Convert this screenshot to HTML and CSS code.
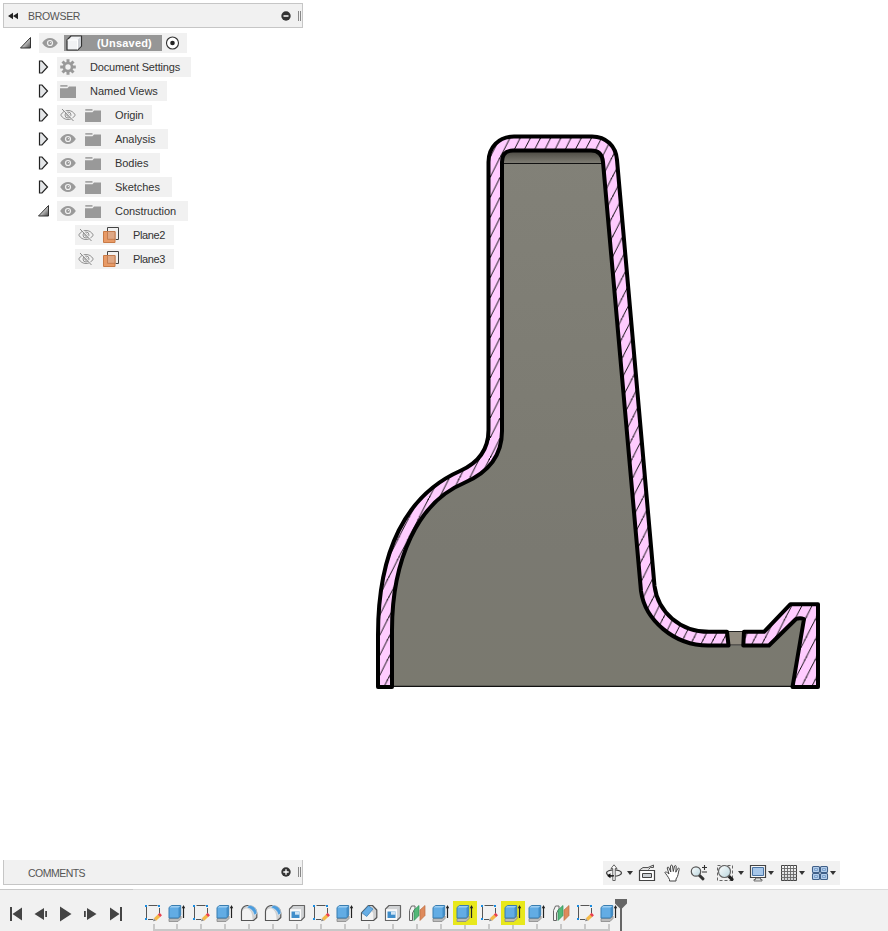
FILE: index.html
```html
<!DOCTYPE html>
<html lang="en">
<head>
<meta charset="utf-8">
<title>Section view</title>
<link rel="stylesheet" href="styles.css">
</head>
<body>
<svg class="defs" aria-hidden="true">
  <defs>
    <linearGradient id="g-open" x1="0" y1="0" x2="1" y2="1"><stop offset=".35" stop-color="#eee"/><stop offset="1" stop-color="#444"/></linearGradient>
    <linearGradient id="g-lens" x1="0" y1="0" x2="1" y2="1"><stop offset="0" stop-color="#fff"/><stop offset="1" stop-color="#b9d6de"/></linearGradient>
    <linearGradient id="g-grey" x1="0" y1="0" x2="0" y2="1"><stop offset="0" stop-color="#f8f8f8"/><stop offset="1" stop-color="#cfd1d3"/></linearGradient>
  </defs>
  <symbol id="closed" viewBox="0 0 12 14"><path d="M1.500 1H4L9.500 7 4 13H1.500Z" fill="#e4e6e8" stroke="#222" stroke-width="1.200"/></symbol>
  <symbol id="open" viewBox="0 0 12 14"><path d="M10.500 1.500V12H.5Z" fill="url(#g-open)" stroke="#333" stroke-width="1"/></symbol>
  <symbol id="eye" viewBox="0 0 16 12"><path d="M.2 6C2.200 2.500 5 1 8 1s5.800 1.500 7.800 5C13.800 9.500 11 11 8 11S2.200 9.500.2 6Z" fill="#9a9a9a"/><circle cx="8" cy="6" r="3.100" fill="#f1f1f1"/><circle cx="8" cy="6" r="1.900" fill="#9a9a9a"/><circle cx="8.500" cy="5.500" r=".6" fill="#f1f1f1"/></symbol>
  <symbol id="hidden" viewBox="0 0 16 12"><g fill="none" stroke="#929292" stroke-width="1"><path d="M.7 6C2.600 2.800 5 1.500 8 1.500s5.400 1.300 7.300 4.500C13.400 9.200 11 10.500 8 10.500S2.600 9.200.7 6Z"/><circle cx="8" cy="6" r="3"/><circle cx="8" cy="6" r="1.200"/></g><path d="M3 0L14 12" stroke="#f1f1f1" stroke-width="1.500"/><path d="M2 0L13.500 12" stroke="#888" stroke-width="1"/></symbol>
  <symbol id="folder" viewBox="0 0 16 13"><path d="M0 3.300H7.500L9 1.500H16V13H0Z" fill="#999"/><path d="M.3 .9H7.500" stroke="#999" stroke-width="1.500"/></symbol>
  <symbol id="gear" viewBox="0 0 16 16"><g stroke="#999" stroke-width="3"><path d="M8 .2V15.800M.2 8H15.800M2.500 2.500L13.500 13.500M13.500 2.500L2.500 13.500"/></g><circle cx="8" cy="8" r="5.300" fill="#999"/><circle cx="8" cy="8" r="2.700" fill="#f1f1f1"/></symbol>
  <symbol id="cube" viewBox="0 0 17 16"><path d="M1 5L5 1H15.500V11L11.500 15H1Z" fill="#f1f2f4" stroke="#333" stroke-width="1.200" stroke-linejoin="round"/><path d="M11.500 5L15 1.500V11L11.500 14.500Z" fill="#cdd0d5"/><path d="M1.500 5H11.500V14.500" fill="none" stroke="#fff"/></symbol>
  <symbol id="plane" viewBox="0 0 16 16"><path d="M4.500 4V.5H15.500V12.500H12.500" fill="none" stroke="#444" stroke-width="1"/><path d="M.5 4.500H12V15.500H.5Z" fill="#e89a66" stroke="#c87a46"/><path d="M4.500 4.500H12V12.300H4.500Z" fill="#dfa885" stroke="#bd7448" stroke-width=".8"/></symbol>

  <symbol id="sketch" viewBox="0 0 24 24"><path d="M5.500 6V17M7.500 4.500H16.500M18.500 7V12.500M7 18.500H12" fill="none" stroke="#555"/><path d="M4 4h2v2H4zM17 4h2v2H17zM4 17h2v2H4z" fill="#1b8ce0"/><path d="M14 18.500L18.300 14.500" stroke="#f4b948" stroke-width="3.400"/><path d="M18 14.800L19.800 13.100" stroke="#e84050" stroke-width="3.400"/><path d="M12 20.300L12.800 17.500 15 19.700Z" fill="#888"/></symbol>
  <symbol id="extrude" viewBox="0 0 24 24"><path d="M4 17.500H13.500L16 15V17.500L13 20.500H4Z" fill="#bbb" stroke="#888" stroke-width=".8"/><path d="M4 6.500L6.500 4.500H15.700V14L13.500 17H4Z" fill="#62ace4" stroke="#397db0" stroke-width="1"/><path d="M4.500 6.500L6.500 5H15.200L13.500 6.500Z" fill="#9dcef2"/><path d="M13.500 7L15.300 5.500V14L13.500 16.300Z" fill="#428ec8"/><path d="M18.500 6V17" stroke="#222" stroke-width="1.200"/><path d="M16.800 7.300L18.500 4 20.200 7.300Z" fill="#222"/></symbol>
  <symbol id="fillet" viewBox="0 0 24 24"><path d="M4.500 19.500V10.500C4.500 7 7.500 4.500 10 4.500H12C16.500 4.500 19.800 8.500 19.800 12V16.500L16.500 19.500Z" fill="#cfd0d1" stroke="#555" stroke-width="1.200" stroke-linejoin="round"/><path d="M5.200 18.900V10.500C6 8 8 7 10 7.500C13.500 8.500 15.500 12 15.500 18.900Z" fill="#f3f3f3"/><path d="M9.800 6.800L12 4.200C16.500 4.200 20 8 20 12.500L17 14.300C16.800 10.300 14 7.600 9.800 6.800Z" fill="#4c9dde" stroke="#f1f1f1" stroke-width=".6"/></symbol>
  <symbol id="chamfer" viewBox="0 0 24 24"><path d="M4.500 19.500V12L11.500 4.500H15.500L19.800 9V16.500L16.500 19.500Z" fill="#cfd0d1" stroke="#555" stroke-width="1.200" stroke-linejoin="round"/><path d="M5.100 18.900V13L10 15.500 14.500 10 16.200 12V18.900Z" fill="#f3f3f3"/><path d="M5 11.700L11.500 4.800 16 8 9.700 15.500Z" fill="#67aee5" stroke="#3a83bb" stroke-width=".7"/></symbol>
  <symbol id="shell" viewBox="0 0 24 24"><path d="M4.500 8L8 4.500H19.500V16L16 19.500H4.500Z" fill="#d0d2d4" stroke="#666" stroke-width="1.200" stroke-linejoin="round"/><path d="M5.100 8.200H16V18.900H5.100Z" fill="#fafafa"/><path d="M6.500 10.500H14.500V17H6.500Z" fill="#3f8ecb"/><path d="M10 10.500H14.500V13.700H10Z" fill="#cfe4f5"/></symbol>
  <symbol id="split" viewBox="0 0 24 24"><path d="M4.500 19.500V9.500L6.500 5H10V8L7.500 12V19.500Z" fill="#f4f4f4" stroke="#666" stroke-width="1"/><path d="M9 19.500V9L14 4.500V14.500Z" fill="#54b878" stroke="#2f915a" stroke-width=".7"/><path d="M15 19.500V9L20 4.500V14.500Z" fill="#de8a5c" stroke="#bb6e42" stroke-width=".7"/></symbol>

  <symbol id="orbit" viewBox="0 0 18 18"><ellipse cx="9" cy="9" rx="7.500" ry="3.200" fill="none" stroke="#444" stroke-width="1.300"/><path d="M7.800 16.500V4.500H6L9 .8 12 4.500H10.200V16.500Z" fill="#fff" stroke="#555" stroke-width=".9"/><path d="M4 11.800H9" stroke="#222" stroke-width="1.400"/><path d="M5.500 9.300V14.300L2 11.800Z" fill="#111"/></symbol>
  <symbol id="look" viewBox="0 0 18 18"><path d="M1.500 6L5 3.500H10L15.500 1V3.500H12.500L10.500 5.500" fill="#ddd" stroke="#555"/><path d="M1.500 6.500H16.500V16.500H1.500Z" fill="#fff" stroke="#444" stroke-width="1.200"/><path d="M4.500 9.500H13.500V13.500H4.500Z" fill="#ccd0d4" stroke="#444"/></symbol>
  <symbol id="hand" viewBox="0 0 18 18"><path d="M5.500 15.500C4 12.500 2 10 .8 8.500 1.800 7.500 3.200 8.200 5 10L3.200 4C3.400 2.700 4.700 2.800 5 4L6.800 8 6.500 2C7 .8 8.200.8 8.500 2L9.300 7.500 10.500 2C11.200 1 12.300 1.500 12.200 2.700L11.800 8.200 13.800 4.500C14.800 3.700 15.700 4.500 15.200 5.500 14 9 14.500 12 12 15V17H5.500Z" fill="#fff" stroke="#444" stroke-width="1" stroke-linejoin="round"/></symbol>
  <symbol id="zoom" viewBox="0 0 18 18"><path d="M9 11L13 14.800" stroke="#333" stroke-width="3" stroke-linecap="round"/><circle cx="6" cy="7.500" r="4.700" fill="url(#g-lens)" stroke="#555" stroke-width="1.200"/><path d="M12 3.500H17M14.500 1V6M12 8H17" stroke="#333" stroke-width="1.100"/></symbol>
  <symbol id="fit" viewBox="0 0 18 18"><path d="M1.500 1.500H16.500V16.500H1.500Z" fill="none" stroke="#666" stroke-dasharray="3 2"/><path d="M12.500 11.800L16 15.300" stroke="#222" stroke-width="3.200" stroke-linecap="round"/><circle cx="8.500" cy="7.500" r="6" fill="url(#g-lens)" stroke="#666" stroke-width="1.200"/></symbol>
  <symbol id="display" viewBox="0 0 18 18"><path d="M1.500 1.500H16.500V13.500H1.500Z" fill="#f8f8f8" stroke="#444" stroke-width="1.200"/><path d="M3.500 3.500H14.500V11.500H3.500Z" fill="#a7c7ea" stroke="#4b75a5"/><path d="M6.500 14H11.500V15.500H13V17H5V15.500H6.500Z" fill="#ddd" stroke="#555" stroke-width=".8"/></symbol>
  <symbol id="grid" viewBox="0 0 18 18"><path d="M1.500 1.500H16.500V16.500H1.500Z" fill="url(#g-grey)" stroke="#444"/><path d="M4.500 1V17M7.500 1V17M10.500 1V17M13.500 1V17M1 4.500H17M1 7.500H17M1 10.500H17M1 13.500H17" stroke="#666" stroke-width=".9"/></symbol>
  <symbol id="views" viewBox="0 0 18 18"><g fill="#b7d0ec" stroke="#3f5f88" stroke-width="1.100"><rect x="1.500" y="2.500" width="7" height="6" rx="1"/><rect x="9.500" y="2.500" width="7" height="6" rx="1"/><rect x="1.500" y="9.500" width="7" height="6" rx="1"/><rect x="9.500" y="9.500" width="7" height="6" rx="1"/></g><g fill="none" stroke="#6f96c4" stroke-width=".8"><path d="M3.500 4.500h3v2h-3zM11.500 4.500h3v2h-3zM3.500 11.500h3v2h-3zM11.500 11.500h3v2h-3z"/></g></symbol>
</svg>

<main class="workspace">
  <svg class="canvas" viewBox="0 0 888 889" aria-label="Section view of the model">
    <defs>
      <pattern id="hatch" patternUnits="userSpaceOnUse" x="490" y="157.300" width="10.180" height="20.050">
        <rect width="11" height="21" fill="#ffccff"/>
        <path d="M0 20.050L10.180 0M-1 22.020L1 18.080M9.180 1.970L11.180 -1.970" stroke="#000" stroke-width=".9"/>
      </pattern>
      <linearGradient id="g-body" x1="0" y1="0" x2="0" y2="1"><stop offset="0" stop-color="#828178"/><stop offset=".55" stop-color="#7c7b72"/><stop offset=".75" stop-color="#7a7971"/><stop offset="1" stop-color="#7a796f"/></linearGradient>
      <linearGradient id="g-cap" x1="0" y1="0" x2="0" y2="1"><stop offset="0" stop-color="#48463f"/><stop offset="1" stop-color="#7e7c73"/></linearGradient>
    </defs>
    <path d="M392 686V630C392 560 418 502 464 483C485 474 502 458 502 431V162Q502 150.500 513 150.500H591Q602 150.500 603 162L641 591C645 620 674 645.500 708 645.500H769L796 619H804L792 686Z" fill="url(#g-body)"/>
    <path d="M502 163V162Q502 150.500 513 150.500H591Q602 150.500 603 163Z" fill="url(#g-cap)"/>
    <path d="M502 163.500H603M392 686.300H793" stroke="#111" stroke-width="1.200"/>
    <rect x="728" y="631" width="16" height="14.500" fill="#918b80"/>
    <path d="M728 631.500H744M728 645H744" stroke="#222" stroke-width="1.200"/>
    <g fill="url(#hatch)" stroke="#000" stroke-width="4" stroke-linejoin="round">
      <path d="M378 687V635C378 551 406 495 460 471C478 463 488.500 450 488.500 430V162C488.500 147 499 136.400 514 136.400H592C606 136.400 616 146 617 160L654.500 586C658 612 680 631.800 709 631.800H727L728.500 645.500H708C674 645.500 645 620 641 591L603 162Q602 150.500 591 150.500H513Q502 150.500 502 162V431C502 458 485 474 464 483C418 502 392 560 392 630V687Z"/>
      <path d="M744 631.800H764L790.500 604.200H818V687H792.500L804 619Q800 617.500 796 619L769 645.500H743.300Z"/>
    </g>
  </svg>

  <section class="browser">
    <header class="panel">
      <svg class="collapse" viewBox="0 0 10 8"><path d="M0 4L5 .8V7.200ZM5 4L10 .8V7.200Z" fill="#222"/></svg>
      <span class="panel-title">BROWSER</span>
      <svg class="badge" viewBox="0 0 10 10"><circle cx="5" cy="5" r="4.700" fill="#333"/><path d="M2.500 5H7.500" stroke="#fff" stroke-width="1.500"/></svg>
      <i class="grip"></i>
    </header>
    <ul class="tree">
      <li class="node root"><svg class="twist"><use href="#open"/></svg><div class="item"><svg class="eye"><use href="#eye"/></svg><span class="selected"><svg class="cube"><use href="#cube"/></svg>(Unsaved)</span><svg class="radio" viewBox="0 0 14 14"><circle cx="6.500" cy="7" r="6" fill="#fff" stroke="#333" stroke-width="1.100"/><circle cx="6.500" cy="7" r="2.300" fill="#222"/></svg></div></li>
      <li class="node"><svg class="twist"><use href="#closed"/></svg><div class="item w-settings"><svg class="gear"><use href="#gear"/></svg><span>Document Settings</span></div></li>
      <li class="node"><svg class="twist"><use href="#closed"/></svg><div class="item w-views"><svg class="folder"><use href="#folder"/></svg><span>Named Views</span></div></li>
      <li class="node"><svg class="twist"><use href="#closed"/></svg><div class="item w-origin"><svg class="eye"><use href="#hidden"/></svg><svg class="folder"><use href="#folder"/></svg><span>Origin</span></div></li>
      <li class="node"><svg class="twist"><use href="#closed"/></svg><div class="item w-analysis"><svg class="eye"><use href="#eye"/></svg><svg class="folder"><use href="#folder"/></svg><span>Analysis</span></div></li>
      <li class="node"><svg class="twist"><use href="#closed"/></svg><div class="item w-bodies"><svg class="eye"><use href="#eye"/></svg><svg class="folder"><use href="#folder"/></svg><span>Bodies</span></div></li>
      <li class="node"><svg class="twist"><use href="#closed"/></svg><div class="item w-sketches"><svg class="eye"><use href="#eye"/></svg><svg class="folder"><use href="#folder"/></svg><span>Sketches</span></div></li>
      <li class="node"><svg class="twist"><use href="#open"/></svg><div class="item w-construction"><svg class="eye"><use href="#eye"/></svg><svg class="folder"><use href="#folder"/></svg><span>Construction</span></div></li>
      <li class="node leaf"><div class="item w-plane"><svg class="eye"><use href="#hidden"/></svg><svg class="plane"><use href="#plane"/></svg><span>Plane2</span></div></li>
      <li class="node leaf"><div class="item w-plane"><svg class="eye"><use href="#hidden"/></svg><svg class="plane"><use href="#plane"/></svg><span>Plane3</span></div></li>
    </ul>
  </section>

  <div class="bottom">
    <section class="panel comments">
      <span class="panel-title">COMMENTS</span>
      <svg class="badge" viewBox="0 0 10 10"><circle cx="5" cy="5" r="4.700" fill="#333"/><path d="M2.300 5H7.700M5 2.300V7.700" stroke="#fff" stroke-width="1.300"/></svg>
      <i class="grip"></i>
    </section>
    <nav class="navbar">
      <svg class="tool"><use href="#orbit"/></svg><i class="caret far"></i>
      <svg class="tool t5"><use href="#look"/></svg>
      <svg class="tool t8"><use href="#hand"/></svg>
      <svg class="tool t8"><use href="#zoom"/></svg>
      <svg class="tool t8"><use href="#fit"/></svg><i class="caret far"></i>
      <svg class="tool t5"><use href="#display"/></svg><i class="caret"></i>
      <svg class="tool t6"><use href="#grid"/></svg><i class="caret"></i>
      <svg class="tool t6"><use href="#views"/></svg><i class="caret"></i>
    </nav>
  </div>
</main>

<footer class="timeline">
  <div class="player">
    <svg viewBox="0 0 14 16"><path d="M1 1H3V15H1ZM13 1.500V14.500L3.500 8Z"/></svg>
    <svg viewBox="0 0 14 16"><path d="M10 2V14L.5 8ZM11.200 5H13V11H11.200Z"/></svg>
    <svg viewBox="0 0 14 16"><path d="M1 .5V15.500L12.500 8Z"/></svg>
    <svg viewBox="0 0 14 16"><path d="M0 5H1.800V11H0ZM3 2V14L12.500 8Z"/></svg>
    <svg viewBox="0 0 14 16"><path d="M1 1.500V14.500L10.500 8ZM11 1H13V15H11Z"/></svg>
  </div>
  <ol class="features">
    <li><svg><use href="#sketch"/></svg></li>
    <li><svg><use href="#extrude"/></svg></li>
    <li><svg><use href="#sketch"/></svg></li>
    <li><svg><use href="#extrude"/></svg></li>
    <li><svg><use href="#fillet"/></svg></li>
    <li><svg><use href="#fillet"/></svg></li>
    <li><svg><use href="#shell"/></svg></li>
    <li><svg><use href="#sketch"/></svg></li>
    <li><svg><use href="#extrude"/></svg></li>
    <li><svg><use href="#chamfer"/></svg></li>
    <li><svg><use href="#shell"/></svg></li>
    <li><svg><use href="#split"/></svg></li>
    <li><svg><use href="#extrude"/></svg></li>
    <li><svg class="warn"><use href="#extrude"/></svg></li>
    <li><svg><use href="#sketch"/></svg></li>
    <li><svg class="warn"><use href="#extrude"/></svg></li>
    <li><svg><use href="#extrude"/></svg></li>
    <li><svg><use href="#split"/></svg></li>
    <li><svg><use href="#sketch"/></svg></li>
    <li><svg><use href="#extrude"/></svg></li>
  </ol>
  <svg class="marker" viewBox="0 0 12 32"><path d="M0 0H12V4.500L7 9.500V32H5V9.500L0 4.500Z" fill="#666"/></svg>
</footer>
</body>
</html>
```

FILE: styles.css
```css
* { box-sizing: border-box; }
body {
  margin: 0;
  height: 931px;
  display: flex;
  flex-direction: column;
  overflow: hidden;
  background: #fff;
  color: #333;
  font: 11px/20px "Liberation Sans", Arial, sans-serif;
}
svg { display: block; flex: none; }
ul, ol { list-style: none; margin: 0; padding: 0; }
.defs { position: absolute; width: 0; height: 0; }

.workspace {
  position: relative;
  height: 889px;
  flex: none;
  display: flex;
  flex-direction: column;
  justify-content: space-between;
  padding: 3px 3px 4px;
}
.canvas { position: absolute; left: 0; top: 0; width: 888px; height: 889px; }
.browser, .bottom { position: relative; }
.browser { width: 300px; }

.panel {
  width: 300px;
  height: 25px;
  display: flex;
  align-items: center;
  background: #f1f1f1;
  border: 1px solid #c6c6c6;
}
.panel-title { color: #555; font-size: 10.5px; letter-spacing: -.3px; }
.collapse { width: 10px; height: 8px; margin: 0 10px 0 4px; }
.badge { width: 10px; height: 10px; margin-left: auto; }
.grip { width: 3px; height: 10px; margin: 0 1px 0 7px; border: solid #888; border-width: 0 1px; }
.comments { border-top: 0; padding-left: 24px; }
.comments .panel-title { letter-spacing: -.52px; padding-top: 1px; }

.tree { padding-top: 5px; }
.node { display: flex; align-items: center; height: 20px; margin-bottom: 4px; padding-left: 35px; }
.root { padding-left: 17px; }
.leaf { padding-left: 72px; }
.twist { width: 12px; height: 14px; margin-right: 7px; }
.item { display: flex; align-items: center; height: 20px; background: #f1f1f1; padding-left: 3px; white-space: nowrap; letter-spacing: -.05px; }
.eye { width: 16px; height: 12px; margin-right: 9px; }
.folder { width: 16px; height: 13px; margin-right: 14px; }
.gear { width: 16px; height: 16px; margin-right: 14px; }
.plane { width: 16px; height: 16px; margin-right: 14px; }
.root .item { width: 148px; }
.root .eye { margin-right: 6px; }
.selected { display: flex; align-items: center; width: 98px; height: 16px; padding-left: 2px; background: #969696; color: #fff; font-weight: bold; letter-spacing: .2px; }
.cube { width: 17px; height: 16px; margin-right: 14px; }
.radio { width: 14px; height: 14px; margin-left: 4px; }
.w-settings { width: 134px; letter-spacing: -.17px; }
.w-views { width: 110px; letter-spacing: .02px; }
.w-origin { width: 95px; letter-spacing: -.15px; }
.w-analysis { width: 111px; }
.w-bodies { width: 103px; }
.w-sketches { width: 115px; }
.w-construction { width: 131px; }
.w-plane { width: 99px; letter-spacing: -.38px; }

.bottom { display: flex; justify-content: space-between; align-items: flex-start; padding-right: 45px; }
.navbar { display: flex; align-items: center; width: 237px; height: 24px; margin-top: 1px; padding-left: 2px; background: #f1f1f1; }
.tool { width: 18px; height: 18px; }
.t5 { margin-left: 5px; }
.t6 { margin-left: 6px; }
.t8 { margin-left: 8px; }
.caret { width: 6px; margin-left: 1px; border: 3px solid transparent; border-top: 4px solid #333; border-bottom: 0; }
.caret.far { margin-left: 4px; }

.timeline {
  height: 42px;
  flex: none;
  display: flex;
  align-items: flex-start;
  background: linear-gradient(90deg, #c8c8c8 133px, #dcdcdc 133px) top / 100% 1px no-repeat #f1f1f1;
}
.player { display: flex; gap: 11px; width: 141px; padding: 17px 0 0 9px; fill: #444; }
.player svg { width: 14px; height: 16px; }
.features { display: flex; padding-top: 12px; }
.features svg { width: 24px; height: 24px; }
.features .warn { background: #e8e81c; }
.features li {
  width: 24px;
  height: 30px;
  background: linear-gradient(#c8c8c8, #c8c8c8) 11px 23px / 2px 5px no-repeat, linear-gradient(#c8c8c8, #c8c8c8) 0 28px / 24px 2px no-repeat;
}
.features li:first-child { background-position: 12px 23px, 12px 28px; }
.features li:last-child { background-size: 2px 5px, 13px 2px; }
.marker { width: 12px; height: 32px; margin: 10px 0 0 -6px; }
```
